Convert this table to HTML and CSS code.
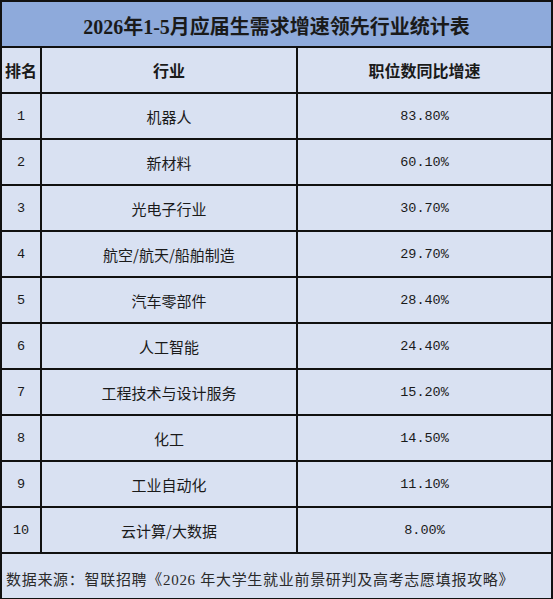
FILE: index.html
```html
<!DOCTYPE html>
<html lang="zh-CN">
<head>
  <meta charset="UTF-8">
  <meta name="viewport" content="width=device-width, initial-scale=1.0">
  <title>2026年1-5月应届生需求增速领先行业统计表</title>
  <link rel="stylesheet" href="styles.css">
</head>
<body>
  <table class="statTable">
    <colgroup>
      <col class="colRank">
      <col class="colName">
      <col class="colRate">
    </colgroup>
    <thead>
      <tr>
        <th colspan="3" class="titleCell">2026年1-5月应届生需求增速领先行业统计表</th>
      </tr>
      <tr class="headRow">
        <th>排名</th>
        <th>行业</th>
        <th>职位数同比增速</th>
      </tr>
    </thead>
    <tbody>
      <tr><td class="rank">1</td><td class="name">机器人</td><td class="rate">83.80%</td></tr>
      <tr><td class="rank">2</td><td class="name">新材料</td><td class="rate">60.10%</td></tr>
      <tr><td class="rank">3</td><td class="name">光电子行业</td><td class="rate">30.70%</td></tr>
      <tr><td class="rank">4</td><td class="name">航空/航天/船舶制造</td><td class="rate">29.70%</td></tr>
      <tr><td class="rank">5</td><td class="name">汽车零部件</td><td class="rate">28.40%</td></tr>
      <tr><td class="rank">6</td><td class="name">人工智能</td><td class="rate">24.40%</td></tr>
      <tr><td class="rank">7</td><td class="name">工程技术与设计服务</td><td class="rate">15.20%</td></tr>
      <tr><td class="rank">8</td><td class="name">化工</td><td class="rate">14.50%</td></tr>
      <tr><td class="rank">9</td><td class="name">工业自动化</td><td class="rate">11.10%</td></tr>
      <tr><td class="rank">10</td><td class="name">云计算/大数据</td><td class="rate">8.00%</td></tr>
    </tbody>
    <tfoot>
      <tr>
        <td colspan="3" class="sourceCell">数据来源：智联招聘《2026 年大学生就业前景研判及高考志愿填报攻略》</td>
      </tr>
    </tfoot>
  </table>
</body>
</html>
```

FILE: styles.css
```css
body {
  margin: 0;
  background-color: #d9e1f2;
  font-family: "Liberation Sans", "Noto Sans CJK SC", sans-serif;
  color: #1a1a1a;
}

.statTable {
  width: 553px;
  table-layout: fixed;
  border-collapse: collapse;
  background-color: #d9e1f2;
}

.colRank {
  width: 40px;
}

.colName {
  width: 256px;
}

.statTable th,
.statTable td {
  height: 44px;
  padding: 0;
  border: 2px solid #111;
  text-align: center;
  vertical-align: middle;
  white-space: nowrap;
  overflow: hidden;
}

.statTable .titleCell {
  background-color: #8eaadb;
  font-family: "Liberation Serif", "Noto Sans CJK SC", serif;
  font-size: 20px;
  font-weight: 700;
  padding-top: 3px;
  height: 41px;
}

.headRow th {
  font-family: "Noto Sans CJK SC", sans-serif;
  font-size: 16px;
  font-weight: 700;
}

.rank,
.rate {
  font-family: "Liberation Mono", monospace;
  font-size: 13.5px;
}

.name {
  font-family: "Noto Sans CJK SC", sans-serif;
  font-size: 15px;
}

.statTable .sourceCell {
  text-align: left;
  padding: 4px 0 0 4px;
  height: 40px;
  font-family: "Liberation Serif", "Noto Sans CJK SC", serif;
  font-size: 15px;
  letter-spacing: 0.7px;
  color: #2a2a2a;
}
```
